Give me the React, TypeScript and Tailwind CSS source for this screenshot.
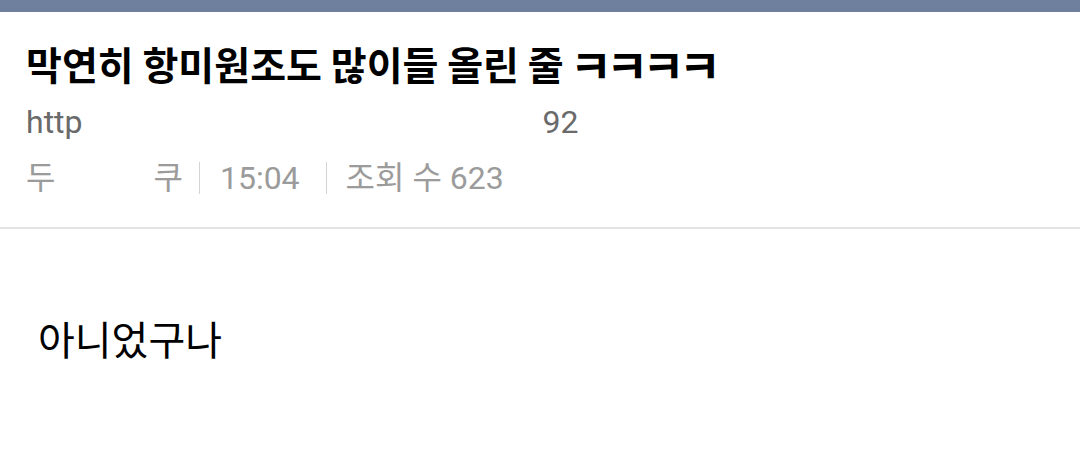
import React from 'react';

const App: React.FC = () => {
  return (
    <div
      className="flex h-[457px] w-full flex-col overflow-hidden bg-white"
      style={{ fontFamily: 'Roboto, "Noto Sans CJK KR", sans-serif' }}
    >
      {/* top bar */}
      <div className="h-[12px] w-full bg-[#6e809e]" />

      {/* header */}
      <div className="flex flex-col px-[26px] pt-[26px]">
        <h1
          className="flex h-[50px] items-center text-[39px] font-bold leading-[50px] text-black"
          style={{ fontFamily: '"Noto Sans CJK KR", sans-serif' }}
        >
          <span className="whitespace-pre">막연히 항미원조도 많이들 올린 줄</span>
          <span className="ml-[6px] text-[46px] tracking-[-6px]">ㅋㅋㅋㅋ</span>
        </h1>

        <div className="mt-[14px] flex h-[40px] items-center text-[32px] text-[#6a6a6a]">
          <span>http</span>
          <span className="ml-[460px]">92</span>
        </div>

        <div className="mt-[16px] flex h-[40px] items-center text-[32px] text-[#9b9b9b]">
          <span>두</span>
          <span className="ml-[98px]">쿠</span>
          <span className="ml-[16px] mr-[20px] inline-block h-[32px] w-px bg-[#d4d4d4]" />
          <span>15:04</span>
          <span className="ml-[26px] mr-[19px] inline-block h-[32px] w-px bg-[#d4d4d4]" />
          <span>조회 수 623</span>
        </div>
      </div>

      <div className="mt-[29px] h-[2px] w-full bg-[#e4e4e4]" />

      {/* body */}
      <div
        className="mt-[84px] pl-[38px] text-[40px] leading-[50px] text-black"
        style={{ fontFamily: '"Noto Sans CJK KR", sans-serif' }}
      >
        아니었구나
      </div>
    </div>
  );
};

export default App;
